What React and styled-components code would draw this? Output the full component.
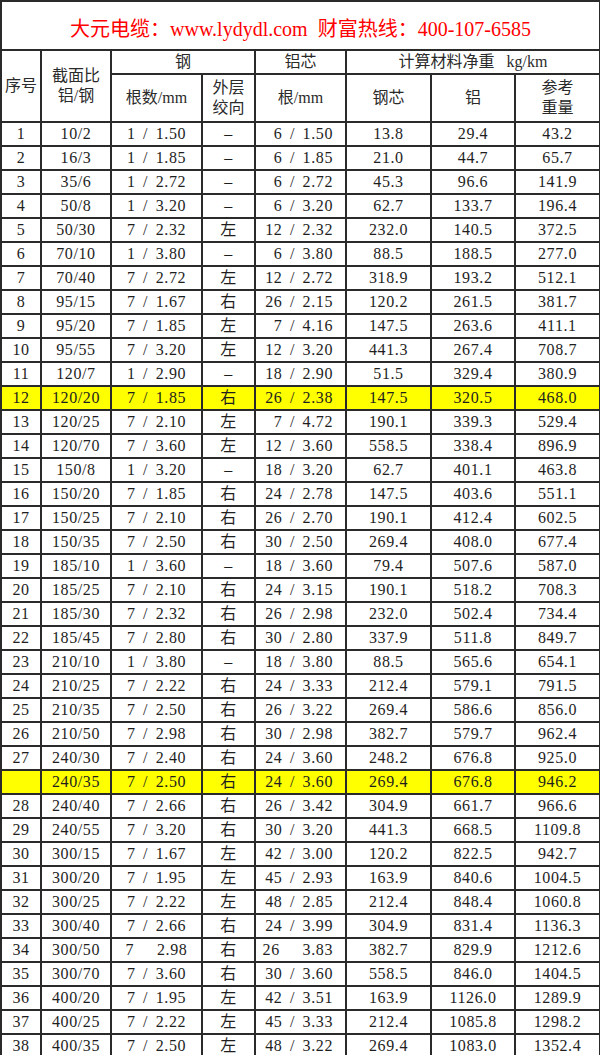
import React from 'react';
import styled, { createGlobalStyle } from 'styled-components';

const GlobalStyle = createGlobalStyle`
    html, body {
        margin: 0;
        padding: 0;
        overflow: hidden;
        background: #fff;
    }
`;

const Table = styled.table`
    width: 599px;
    table-layout: fixed;
    border-collapse: collapse;
    font-family: "Liberation Serif", "Noto Sans CJK SC", serif;
    font-size: 16px;
    color: #1e1e1e;
    td {
        border: 2px solid #2a2a2a;
        padding: 0;
    }
`;

const TitleRow = styled.tr`
    height: 49px;
`;

const TitleCell = styled.td`
    text-align: center;
    color: #ff0000;
    font-size: 20px;
    padding-top: 4px !important;
    white-space: pre;
`;

const HeadRow = styled.tr`
    height: ${props => props.$tall ? '48px' : '24px'};
`;

const HeadCell = styled.td`
    text-align: center;
    line-height: 20px;
    color: #2a2a2a;
    white-space: pre;
`;

const Row = styled.tr`
    height: 24px;
    background: ${props => props.$highlight ? '#ffff00' : 'transparent'};
`;

const Cell = styled.td`
    text-align: ${props => props.$align || 'center'};
    padding-right: ${props => props.$align === 'right' ? '12px' : '0'} !important;
    white-space: pre;
    letter-spacing: 0.6px;
    word-spacing: 3px;
    line-height: 22px;
`;

const widths = [40, 70, 91, 53, 91, 85, 84, 85];

const rows = [
    ['1', '10/2', '1 / 1.50', '–', '6 / 1.50', '13.8', '29.4', '43.2'],
    ['2', '16/3', '1 / 1.85', '–', '6 / 1.85', '21.0', '44.7', '65.7'],
    ['3', '35/6', '1 / 2.72', '–', '6 / 2.72', '45.3', '96.6', '141.9'],
    ['4', '50/8', '1 / 3.20', '–', '6 / 3.20', '62.7', '133.7', '196.4'],
    ['5', '50/30', '7 / 2.32', '左', '12 / 2.32', '232.0', '140.5', '372.5'],
    ['6', '70/10', '1 / 3.80', '–', '6 / 3.80', '88.5', '188.5', '277.0'],
    ['7', '70/40', '7 / 2.72', '左', '12 / 2.72', '318.9', '193.2', '512.1'],
    ['8', '95/15', '7 / 1.67', '右', '26 / 2.15', '120.2', '261.5', '381.7'],
    ['9', '95/20', '7 / 1.85', '左', '7 / 4.16', '147.5', '263.6', '411.1'],
    ['10', '95/55', '7 / 3.20', '左', '12 / 3.20', '441.3', '267.4', '708.7'],
    ['11', '120/7', '1 / 2.90', '–', '18 / 2.90', '51.5', '329.4', '380.9'],
    ['12', '120/20', '7 / 1.85', '右', '26 / 2.38', '147.5', '320.5', '468.0', true],
    ['13', '120/25', '7 / 2.10', '左', '7 / 4.72', '190.1', '339.3', '529.4'],
    ['14', '120/70', '7 / 3.60', '左', '12 / 3.60', '558.5', '338.4', '896.9'],
    ['15', '150/8', '1 / 3.20', '–', '18 / 3.20', '62.7', '401.1', '463.8'],
    ['16', '150/20', '7 / 1.85', '右', '24 / 2.78', '147.5', '403.6', '551.1'],
    ['17', '150/25', '7 / 2.10', '右', '26 / 2.70', '190.1', '412.4', '602.5'],
    ['18', '150/35', '7 / 2.50', '右', '30 / 2.50', '269.4', '408.0', '677.4'],
    ['19', '185/10', '1 / 3.60', '–', '18 / 3.60', '79.4', '507.6', '587.0'],
    ['20', '185/25', '7 / 2.10', '右', '24 / 3.15', '190.1', '518.2', '708.3'],
    ['21', '185/30', '7 / 2.32', '右', '26 / 2.98', '232.0', '502.4', '734.4'],
    ['22', '185/45', '7 / 2.80', '右', '30 / 2.80', '337.9', '511.8', '849.7'],
    ['23', '210/10', '1 / 3.80', '–', '18 / 3.80', '88.5', '565.6', '654.1'],
    ['24', '210/25', '7 / 2.22', '右', '24 / 3.33', '212.4', '579.1', '791.5'],
    ['25', '210/35', '7 / 2.50', '右', '26 / 3.22', '269.4', '586.6', '856.0'],
    ['26', '210/50', '7 / 2.98', '右', '30 / 2.98', '382.7', '579.7', '962.4'],
    ['27', '240/30', '7 / 2.40', '右', '24 / 3.60', '248.2', '676.8', '925.0'],
    ['', '240/35', '7 / 2.50', '右', '24 / 3.60', '269.4', '676.8', '946.2', true],
    ['28', '240/40', '7 / 2.66', '右', '26 / 3.42', '304.9', '661.7', '966.6'],
    ['29', '240/55', '7 / 3.20', '右', '30 / 3.20', '441.3', '668.5', '1109.8'],
    ['30', '300/15', '7 / 1.67', '左', '42 / 3.00', '120.2', '822.5', '942.7'],
    ['31', '300/20', '7 / 1.95', '左', '45 / 2.93', '163.9', '840.6', '1004.5'],
    ['32', '300/25', '7 / 2.22', '左', '48 / 2.85', '212.4', '848.4', '1060.8'],
    ['33', '300/40', '7 / 2.66', '右', '24 / 3.99', '304.9', '831.4', '1136.3'],
    ['34', '300/50', '7   2.98', '右', '26   3.83', '382.7', '829.9', '1212.6'],
    ['35', '300/70', '7 / 3.60', '右', '30 / 3.60', '558.5', '846.0', '1404.5'],
    ['36', '400/20', '7 / 1.95', '左', '42 / 3.51', '163.9', '1126.0', '1289.9'],
    ['37', '400/25', '7 / 2.22', '左', '45 / 3.33', '212.4', '1085.8', '1298.2'],
    ['38', '400/35', '7 / 2.50', '左', '48 / 3.22', '269.4', '1083.0', '1352.4'],
];

export default function App() {
    return (
        <>
            <GlobalStyle />
            <Table>
                <colgroup>
                    {widths.map((w, i) => <col key={i} style={{ width: w }} />)}
                </colgroup>
                <tbody>
                    <TitleRow>
                        <TitleCell colSpan={8}>{'大元电缆：www.lydydl.com  财富热线：400-107-6585'}</TitleCell>
                    </TitleRow>
                    <HeadRow>
                        <HeadCell rowSpan={2}>序号</HeadCell>
                        <HeadCell rowSpan={2}>截面比<br />铝/钢</HeadCell>
                        <HeadCell colSpan={2}>钢</HeadCell>
                        <HeadCell>铝芯</HeadCell>
                        <HeadCell colSpan={3}>{'计算材料净重   kg/km'}</HeadCell>
                    </HeadRow>
                    <HeadRow $tall>
                        <HeadCell>根数/mm</HeadCell>
                        <HeadCell>外层<br />绞向</HeadCell>
                        <HeadCell>根/mm</HeadCell>
                        <HeadCell>钢芯</HeadCell>
                        <HeadCell>铝</HeadCell>
                        <HeadCell>参考<br />重量</HeadCell>
                    </HeadRow>
                    {rows.map((r, i) => (
                        <Row key={i} $highlight={r[8]}>
                            <Cell>{r[0]}</Cell>
                            <Cell>{r[1]}</Cell>
                            <Cell>{r[2]}</Cell>
                            <Cell>{r[3]}</Cell>
                            <Cell $align="right">{r[4]}</Cell>
                            <Cell>{r[5]}</Cell>
                            <Cell>{r[6]}</Cell>
                            <Cell>{r[7]}</Cell>
                        </Row>
                    ))}
                </tbody>
            </Table>
        </>
    );
}
